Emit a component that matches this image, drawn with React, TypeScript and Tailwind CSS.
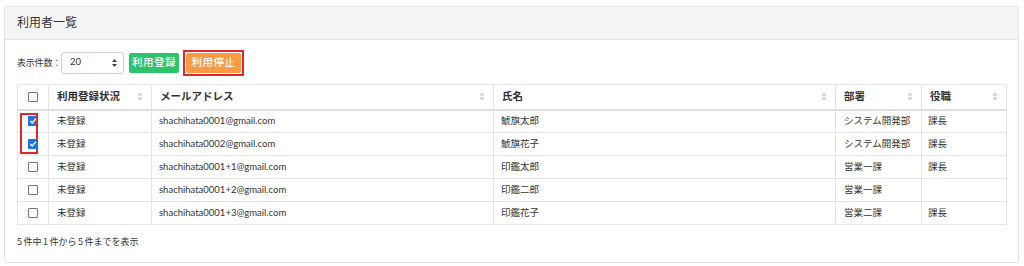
import {useState} from "react";

const rows = [
    {checked: true, status: "未登録", email: "shachihata0001@gmail.com", name: "鯱旗太郎", dept: "システム開発部", role: "課長"},
    {checked: true, status: "未登録", email: "shachihata0002@gmail.com", name: "鯱旗花子", dept: "システム開発部", role: "課長"},
    {checked: false, status: "未登録", email: "shachihata0001+1@gmail.com", name: "印鑑太郎", dept: "営業一課", role: "課長"},
    {checked: false, status: "未登録", email: "shachihata0001+2@gmail.com", name: "印鑑二郎", dept: "営業一課", role: ""},
    {checked: false, status: "未登録", email: "shachihata0001+3@gmail.com", name: "印鑑花子", dept: "営業二課", role: "課長"},
]

const SortIcon = () => (
    <svg width="6" height="9" viewBox="0 0 6 9" className={"shrink-0"}>
        <path d="M3 0.5 L5.5 3.5 H0.5 Z" fill="#c8c8c8"/>
        <path d="M3 8.5 L5.5 5.5 H0.5 Z" fill="#c8c8c8"/>
    </svg>
)

const Check = ({checked}: { checked: boolean }) => (
    <span
        className={checked
            ? "w-[10px] h-[10px] rounded-[1px] bg-[#1a73e8] flex items-center justify-center"
            : "w-[10px] h-[10px] rounded-[1px] border border-[#767676] bg-white"}>
        {checked && (
            <svg width="8" height="8" viewBox="0 0 8 8">
                <path d="M1.3 4.1 L3.2 5.9 L6.8 1.8" stroke="white" strokeWidth="1.4" fill="none"/>
            </svg>
        )}
    </span>
)

const Th = ({label, sort = true}: { label?: string, sort?: boolean }) => (
    <th className={"border border-[#e3e3e3] border-b-2 border-b-[#dcdfe4] px-[8px] h-[25px] font-bold text-left"}>
        <div className={"flex items-center justify-between"}>
            <span>{label}</span>
            {sort && <SortIcon/>}
        </div>
    </th>
)

const Num = ({n}: { n: string }) => <span className={"mx-[1.5px]"}>{n}</span>

export default function App() {

    const [items] = useState(rows)

    return (
        <div className={"w-[1024px] h-[266px] bg-white pl-[4px] pr-[5px] pt-[6px] font-['Lato','Noto_Sans_CJK_JP',sans-serif] text-[#333]"}>
            <div className={"h-[257px] border border-[#e6e6e6] rounded-[2px] flex flex-col"}>
                <div className={"h-[33px] shrink-0 bg-[#f5f5f5] border-b border-[#e3e3e3] flex items-center px-[12px] text-[12px] text-[#333]"}>
                    利用者一覧
                </div>

                <div className={"pl-[12px] pr-[12px] pt-[10px]"}>
                    <div className={"flex items-center h-[25px]"}>
                        <span className={"text-[9px] tracking-[-0.2px]"}>表示件数：</span>
                        <div className={"w-[63px] h-[22px] border border-[#cfcfcf] rounded-[3px] flex items-center justify-between pl-[8px] pr-[6px] text-[9.5px]"}>
                            <span>20</span>
                            <svg width="5" height="8" viewBox="0 0 5 8">
                                <path d="M2.5 0 L5 3 H0 Z" fill="#444"/>
                                <path d="M2.5 8 L5 5 H0 Z" fill="#444"/>
                            </svg>
                        </div>
                        <button className={"ml-[5px] h-[20px] w-[50px] rounded-[2px] bg-[#2bc46a] text-white text-[10.5px] font-medium tracking-[0.5px] flex items-center justify-center"}>
                            利用登録
                        </button>
                        <div className={"ml-[4px] p-[1px] border-2 border-[#e0262a]"}>
                            <button className={"h-[20px] w-[55px] rounded-[2px] bg-[#fb9a45] text-white text-[10.5px] font-medium tracking-[0.5px] flex items-center justify-center"}>
                                利用停止
                            </button>
                        </div>
                    </div>

                    <table className={"mt-[9px] w-[989px] border-collapse table-fixed text-[10.5px]"}>
                        <colgroup>
                            <col className={"w-[31px]"}/>
                            <col className={"w-[103px]"}/>
                            <col className={"w-[342px]"}/>
                            <col className={"w-[342px]"}/>
                            <col className={"w-[86px]"}/>
                            <col className={"w-[85px]"}/>
                        </colgroup>
                        <thead>
                        <tr>
                            <th className={"border border-[#e3e3e3] border-b-2 border-b-[#dcdfe4] h-[25px]"}>
                                <div className={"flex justify-center"}>
                                    <Check checked={false}/>
                                </div>
                            </th>
                            <Th label={"利用登録状況"}/>
                            <Th label={"メールアドレス"}/>
                            <Th label={"氏名"}/>
                            <Th label={"部署"}/>
                            <Th label={"役職"}/>
                        </tr>
                        </thead>
                        <tbody className={"text-[9.5px]"}>
                        {items.map((r, i) => (
                            <tr key={i} className={"h-[23px]"}>
                                <td className={"border border-[#e6e6e6] relative"}>
                                    <div className={"flex justify-center"}>
                                        <Check checked={r.checked}/>
                                    </div>
                                    {i === 0 && (
                                        <div className={"absolute left-[2px] top-[2px] w-[18px] h-[41px] border-2 border-[#e0262a]"}/>
                                    )}
                                </td>
                                <td className={"border border-[#e6e6e6] px-[8px]"}>{r.status}</td>
                                <td className={"border border-[#e6e6e6] px-[7px]"}>{r.email}</td>
                                <td className={"border border-[#e6e6e6] px-[7px]"}>{r.name}</td>
                                <td className={"border border-[#e6e6e6] px-[8px]"}>{r.dept}</td>
                                <td className={"border border-[#e6e6e6] px-[6px]"}>{r.role}</td>
                            </tr>
                        ))}
                        </tbody>
                    </table>

                    <div className={"mt-[10px] text-[9px] font-['Noto_Sans_CJK_JP',sans-serif]"}>
                        <span className={"mr-[1.5px]"}>5</span>件中<Num n={"1"}/>件から<Num n={"5"}/>件までを表示
                    </div>
                </div>
            </div>
        </div>
    )
}
